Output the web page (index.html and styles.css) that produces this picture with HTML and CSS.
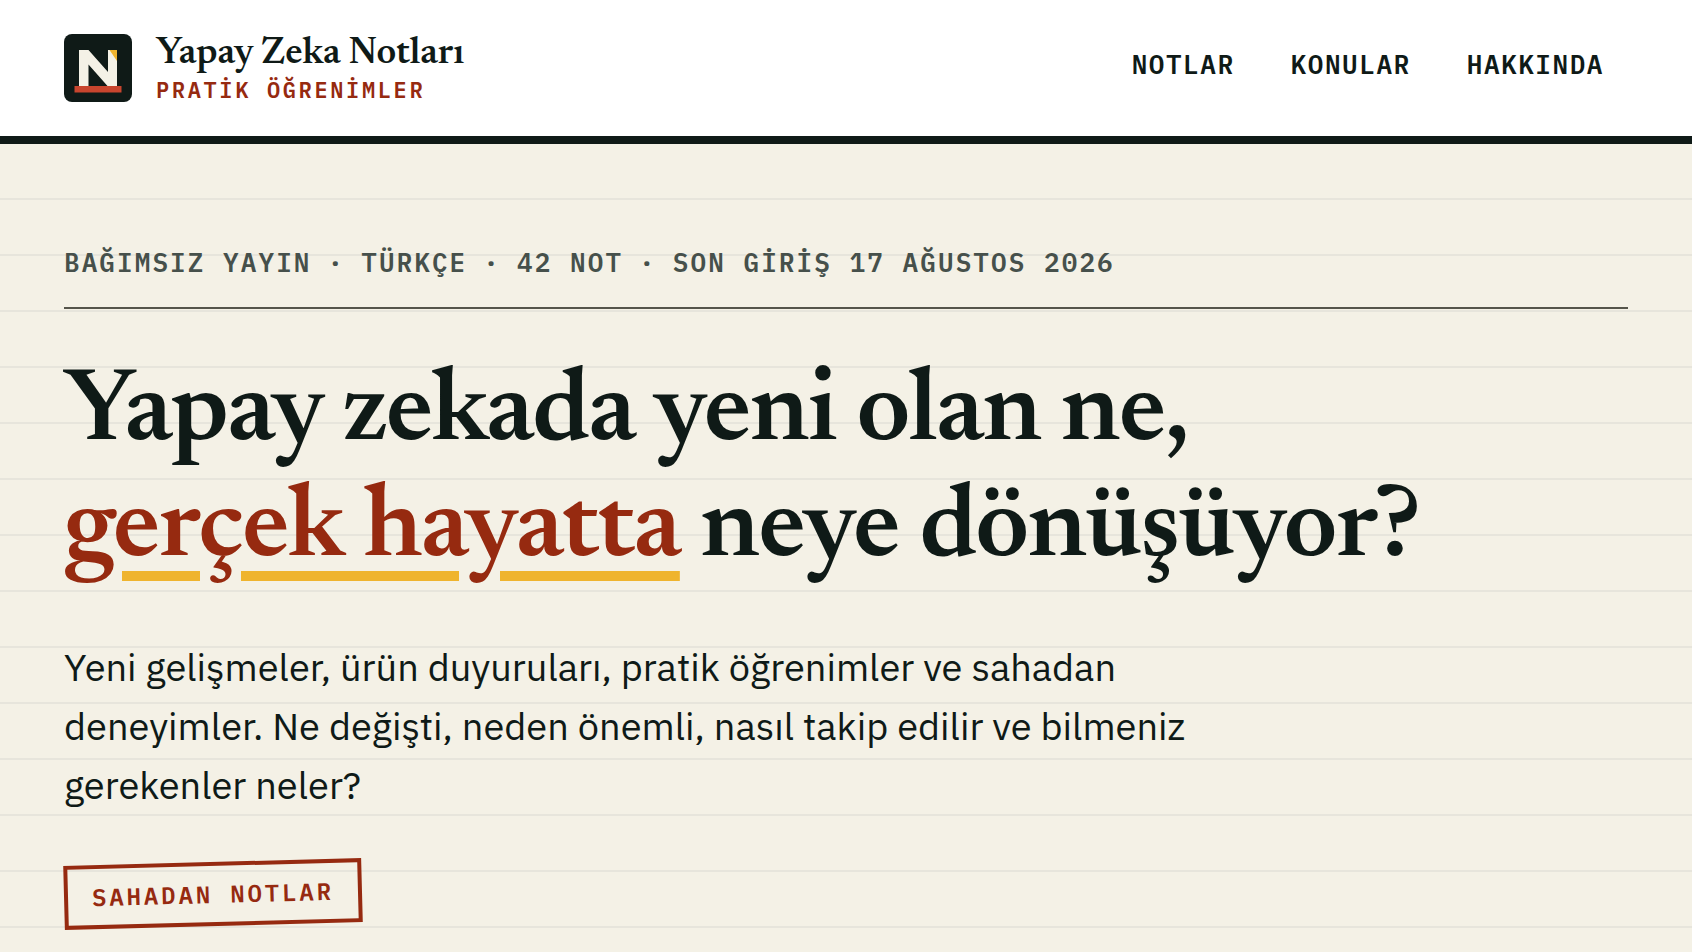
FILE: index.html
```html
<!DOCTYPE html>
<html lang="tr">

<head>
    <meta charset="UTF-8">
    <meta name="viewport" content="width=device-width, initial-scale=1.0">
    <title>Yapay Zeka Notları</title>
    <link rel="stylesheet" href="styles.css">
</head>

<body>

    <header class="site-header">
        <a class="brand" href="#">
            <svg class="brand-logo" viewBox="0 0 68 68" aria-hidden="true">
                <rect width="68" height="68" rx="8" fill="#0f1a17" />
                <path d="M15 16h9.500L44 38V16h9v36h-9.500L24.500 30.500V52H15z" fill="#f4f1e6" />
                <path d="M45.500 16H53v11z" fill="#efb42e" />
                <rect x="10.500" y="52" width="47" height="6.500" fill="#c8452e" />
            </svg>
            <span class="brand-text">
                <span class="brand-name">Yapay Zeka Notları</span>
                <span class="brand-tagline">PRATİK ÖĞRENİMLER</span>
            </span>
        </a>

        <nav class="site-nav">
            <a href="#notlar">NOTLAR</a>
            <a href="#konular">KONULAR</a>
            <a href="#hakkinda">HAKKINDA</a>
        </nav>
    </header>

    <main class="hero">
        <p class="hero-meta">
            <span>BAĞIMSIZ YAYIN</span>
            <span>·</span>
            <span>TÜRKÇE</span>
            <span>·</span>
            <span>42 NOT</span>
            <span>·</span>
            <span>SON GİRİŞ 17 AĞUSTOS 2026</span>
        </p>
        <h1>Yapay zekada yeni olan ne,<br><em>gerçek hayatta</em> neye dönüşüyor?</h1>
        <p class="hero-lede">Yeni gelişmeler, ürün duyuruları, pratik öğrenimler ve sahadan deneyimler. Ne değişti, neden önemli, nasıl takip edilir ve bilmeniz gerekenler neler?</p>
        <span class="stamp">SAHADAN NOTLAR</span>
    </main>

</body>

</html>
```
FILE: styles.css
```css
* {
    box-sizing: border-box;
}

body {
    margin: 0;
    min-height: 100vh;
    display: flex;
    flex-direction: column;
    background-color: #f4f1e6;
    color: #0f1a17;
    font-family: 'IBM Plex Sans', 'Noto Sans', sans-serif;
}

.site-header {
    display: flex;
    justify-content: space-between;
    align-items: center;
    padding: 32px 64px;
    background-color: #fff;
    border-bottom: 8px solid #0f1a17;
}

.brand {
    display: flex;
    align-items: center;
    gap: 24px;
    color: inherit;
    text-decoration: none;
}

.brand-logo {
    width: 68px;
    height: 68px;
}

.brand-text {
    display: flex;
    flex-direction: column;
}

.brand-name {
    font-family: 'Newsreader', 'Liberation Serif', serif;
    font-size: 38px;
    font-weight: 600;
    line-height: 44px;
}

.brand-tagline {
    color: #962a10;
    font-family: 'IBM Plex Mono', 'Liberation Mono', monospace;
    font-size: 22px;
    font-weight: 600;
    line-height: 28px;
    letter-spacing: 0.12em;
}

.site-nav {
    display: flex;
    gap: 8px;
}

.site-nav a {
    padding: 0 24px 8px;
    color: inherit;
    font-family: 'IBM Plex Mono', 'Liberation Mono', monospace;
    font-size: 26px;
    font-weight: 600;
    line-height: 38px;
    letter-spacing: 0.06em;
    text-decoration: none;
}

.hero {
    flex: 1;
    padding: 100px 64px 24px;
    /* ruled paper */
    background-image: repeating-linear-gradient(transparent 0 54px, #e7e5dc 54px 56px);
}

.hero-meta {
    display: flex;
    flex-wrap: wrap;
    gap: 0 16px;
    margin: 0 0 48px;
    padding-bottom: 27px;
    border-bottom: 2px solid #55554b;
    color: #46504b;
    font-family: 'IBM Plex Mono', 'Liberation Mono', monospace;
    font-size: 26px;
    font-weight: 600;
    line-height: 36px;
    letter-spacing: 0.08em;
}

h1 {
    margin: 0 0 48px;
    font-family: 'Newsreader', 'Liberation Serif', serif;
    font-size: 104px;
    font-weight: 600;
    line-height: 116px;
    letter-spacing: -0.015em;
}

h1 em {
    color: #962a10;
    font-style: normal;
    text-decoration: underline #efb42e 10px;
    text-underline-offset: 16px;
}

.hero-lede {
    max-width: 1180px;
    margin: 0 0 48px;
    font-size: 38px;
    line-height: 59px;
}

.stamp {
    display: inline-block;
    padding: 10px 24px;
    border: 4px solid #962a10;
    color: #962a10;
    font-family: 'IBM Plex Mono', 'Liberation Mono', monospace;
    font-size: 24px;
    font-weight: 600;
    line-height: 36px;
    letter-spacing: 0.12em;
    transform: rotate(-1.500deg);
}
```
